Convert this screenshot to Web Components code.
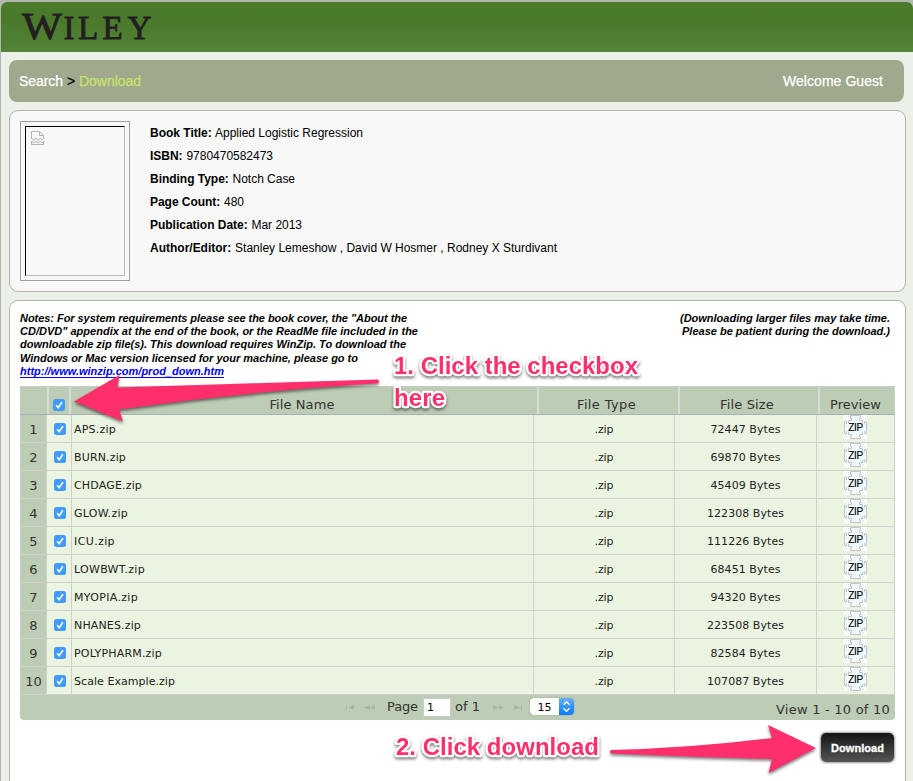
<!DOCTYPE html>
<html lang="en">
<head>
<meta charset="utf-8">
<title>Wiley Download</title>
<style>
html,body{margin:0;height:781px;overflow:hidden;background:#b3b6aa}
body{font-family:"Liberation Sans",Arial,sans-serif;color:#000}
</style>
</head>
<body>
<wiley-page></wiley-page>
<script>
const define = (name, html, setup) => customElements.define(name, class extends HTMLElement {
  constructor() {
    super();
    this.attachShadow({ mode: 'open' });
  }
  connectedCallback() {
    if (this.shadowRoot.childNodes.length) return;
    const t = document.createElement('template');
    t.innerHTML = typeof html === 'function' ? html(this) : html;
    this.shadowRoot.append(t.content.cloneNode(true));
    if (setup) setup(this);
  }
});

/* Spaces its letters so that the line takes the width given in "w". */
define('fit-text', '<style>:host{display:inline-block;white-space:pre}span{display:inline-block;text-decoration:inherit}</style><span><slot></slot></span>', el => {
  const s = el.shadowRoot.querySelector('span'), w = +el.getAttribute('w'), n = el.textContent.length;
  if (!w) return;
  s.style.letterSpacing = (w - s.getBoundingClientRect().width) / n + 'px';
});

define('site-header', `<style>
:host{display:block;height:50px;background:linear-gradient(#4a7a2b 0,#4a792c 35%,#538336 100%);border-radius:6px 6px 0 0}
svg{display:block}
text{font-family:"Liberation Serif",serif;fill:#231f20;stroke:#231f20;stroke-width:.9px}
</style>
<svg width="200" height="50"><text x="21" y="37" font-size="38" textLength="40" lengthAdjust="spacingAndGlyphs">W</text><text x="62.500 77 101.500 126.500" y="37" font-size="33">ILEY</text></svg>`);

define('crumb-bar', `<style>
:host{display:flex;align-items:center;justify-content:space-between;box-sizing:border-box;height:42px;margin:8px 9px 0 8px;padding:0 21px 0 10px;border-radius:8px;background:#a0a98e;font-size:14px;color:#fff;-webkit-text-stroke:.25px}
i{font-style:normal;color:#000}b{font-weight:400;color:#c6e468}
</style><span><fit-text w="44">Search</fit-text> <i>&gt;</i> <b><fit-text w="62">Download</fit-text></b></span><fit-text w="100">Welcome Guest</fit-text>`);

define('info-panel', `<style>
:host{display:block;box-sizing:border-box;margin:8px 7px 0 8px;border:1px solid #b1b5a8;border-radius:9px;background:var(--fill,#fff)}
</style><slot></slot>`);

define('book-cover', `<style>
:host{display:block;box-sizing:border-box;width:110px;height:160px;border:1px solid #a0a0a0;padding:4px}
div{box-sizing:border-box;height:150px;width:100px;border:1px solid #bbb;border-top-color:#000;border-left-color:#000;padding:4px 5px}
svg{display:block}
</style><div><svg width="13" height="14" fill="none" stroke="#b4b4b4"><path d="M.5 8V.5H8.5L12.500 4V8M8.500.5V4.500H12M.5 7.5L3 9.5L5 7L7 9.500L9 7L12 9M.5 10V13.5H12.5V10M.5 10.5L3 12L5 10.5L7 12L9 10.5L12 12"/></svg></div>`);

define('book-field', `<style>:host{display:block;height:23px;line-height:23px;font-size:12px;white-space:pre}b{font-weight:700;margin-right:.5px}</style><fit-text></fit-text>`, el => {
  const f = el.shadowRoot.querySelector('fit-text');
  const w = +el.getAttribute('w');
  const b = document.createElement('b');
  b.textContent = el.getAttribute('label') + ':';
  f.append(b, ' ' + el.getAttribute('value'));
  const s = f.shadowRoot.querySelector('span');
  s.style.letterSpacing = (w - s.getBoundingClientRect().width) / f.textContent.length + 'px';
});

define('book-details', `<style>
:host{display:flex;gap:20px;padding:10px;height:160px}
.d{padding-top:1px}
</style><book-cover></book-cover><div class="d">
<book-field w="213" label="Book Title" value="Applied Logistic Regression"></book-field>
<book-field w="123" label="ISBN" value="9780470582473"></book-field>
<book-field w="145" label="Binding Type" value="Notch Case"></book-field>
<book-field w="94" label="Page Count" value="480"></book-field>
<book-field w="152" label="Publication Date" value="Mar 2013"></book-field>
<book-field w="407" label="Author/Editor" value="Stanley Lemeshow , David W Hosmer , Rodney X Sturdivant"></book-field></div>`);

define('download-notes', `<style>
:host{display:flex;justify-content:space-between;height:74px;padding:11px 15px 0 10px;font:italic bold 11px/13.2px "Liberation Sans",Arial,sans-serif}
fit-text{display:block}.r{text-align:right}a{display:block;width:204px;height:13px;box-sizing:border-box;color:#00e;border-bottom:1px solid #00e}
</style><div>
<fit-text w="387">Notes: For system requirements please see the book cover, the "About the</fit-text>
<fit-text w="398">CD/DVD" appendix at the end of the book, or the ReadMe file included in the</fit-text>
<fit-text w="386">downloadable zip file(s). This download requires WinZip. To download the</fit-text>
<fit-text w="338">Windows or Mac version licensed for your machine, please go to</fit-text>
<a><fit-text w="204">http://www.winzip.com/prod_down.htm</fit-text></a></div>
<div class="r"><fit-text w="210">(Downloading larger files may take time.</fit-text><fit-text w="208">Please be patient during the download.)</fit-text></div>`);

define('check-box', `<style>:host{display:block;width:12px;height:12px}svg{display:block}</style>
<svg width="12" height="12"><rect width="12" height="12" rx="2.5" fill="#409cf8"/><path d="M3.2 6.2L5.2 8.7L8.9 3.3" fill="none" stroke="#fff" stroke-width="1.6"/></svg>`);

define('zip-icon', `<style>:host{display:block;width:23px;height:24px}svg{display:block}text{font:10px "Liberation Sans",Arial,sans-serif;fill:#000;stroke:#000;stroke-width:.15px}</style>
<svg width="23" height="24"><rect width="23" height="24" fill="#fcfdfc"/><path d="M6.5.5H16.5V3.5H15.500V5.500H18.500V8.500H20.500V6.500H22.500V18.500H20.500V16.500H18.500V19.500H15.500V21.500H16.500V23.500H6.500V21.500H7.500V19.500H4.500V16.500H2.500V18.500H.5V6.500H2.500V8.500H4.500V5.500H7.500V3.500H6.500Z" fill="#effaff" stroke="#c3c5c8"/><path d="M1 5L5 1M2 7L6 3M18 1L22 5M17 3L21 7M1 19L5 23M2 17L6 21M18 23L22 19M17 21L21 17" stroke="#c9cfcc" stroke-dasharray="1 1" fill="none"/><rect x="3" y="8" width="17" height="9" fill="#effaff"/><text x="4.200" y="16" textLength="15" lengthAdjust="spacing">ZIP</text></svg>`);

define('file-row', el => {
  const a = n => el.getAttribute(n);
  return `<style>
:host{display:grid;grid-template-columns:26px 25px 462px 141px 142px 78px;height:28px;font:11px "DejaVu Sans",Verdana,sans-serif;color:#222;border-left:1px solid #ccc;box-sizing:border-box}
div{box-sizing:border-box;border-right:1px solid #d0d0d0;border-bottom:1px solid #d0d0d0;background:#eaf4e0;display:flex;align-items:center;justify-content:center;padding-top:1px}
.n{background:#bdccb5;font-size:13px;color:#333}
.f{justify-content:flex-start;padding-left:2px}
.z{align-items:flex-start;padding-top:0}
.c{padding-top:0}
check-box{margin-left:1px}
</style><div class="n">${a('n')}</div><div class="c"><check-box></check-box></div><div class="f"><fit-text w="${a('w')}">${a('name')}</fit-text></div><div><fit-text w="19">.zip</fit-text></div><div><fit-text w="${a('size').length > 5 ? 77 : 70}">${a('size')} Bytes</fit-text></div><div class="z"><zip-icon></zip-icon></div>`;
});

define('grid-head', `<style>
:host{display:grid;grid-template-columns:29px 22px 468px 141px 140px 75px;box-sizing:border-box;height:29px;background:#bdccb5;border-top:1px solid #c9cdc6;border-bottom:1px solid #a6b2b8;font:13px "DejaVu Sans",Verdana,sans-serif;color:#333}
div{display:flex;justify-content:center;align-items:flex-start;padding-top:10px;box-sizing:border-box;border-right:2px solid #d9dcd6}
div:last-child{border-right:1px solid #ccc;padding-right:3px}
.n,.t{padding-right:4px}
check-box{margin-top:2px}
</style><div></div><div><check-box></check-box></div><div class="n"><fit-text w="65">File Name</fit-text></div><div class="t"><fit-text w="59">File Type</fit-text></div><div class="t"><fit-text w="54">File Size</fit-text></div><div><fit-text w="51">Preview</fit-text></div>`);

define('grid-pager', `<style>
:host{display:flex;align-items:flex-start;height:25px;background:#bdccb5;border-radius:0 0 4px 4px;font:13px/15px "DejaVu Sans",Verdana,sans-serif;color:#333;box-sizing:border-box;padding-left:325px}
svg{display:block}
.arr{margin-top:8px}
.p{margin:4px 5px 0 16px}
.in{box-sizing:border-box;width:28px;height:19px;margin-top:3px;border:1px solid #ccc;background:#fff;color:#000;font-size:11px;line-height:18px;padding-left:3px}
.of{margin:4px 0 0 4px}
.sel{display:flex;width:44px;height:17px;margin:3px 0 0 11px;background:#fff;border-radius:4px;overflow:hidden;box-shadow:0 0 1px #555;color:#000;font-size:11px;line-height:19px}
.sel span{width:29px;text-align:center}
.view{margin:7px 5px 0 auto}
</style>
<svg class="arr" width="31" height="9" fill="#a9b5a1"><path d="M1 2h1v5h-1zM9 2V7L3 4.500ZM25 2V7L19 4.500ZM30 2V7L25 4.500Z"/></svg>
<fit-text class="p" style="margin-left:11px" w="31">Page</fit-text><div class="in">1</div><fit-text class="of" w="25">of 1</fit-text>
<svg class="arr" style="margin-left:12px" width="32" height="9" fill="#a9b5a1"><path d="M1 2V7L7 4.500ZM7 2V7L12 4.500ZM22 2V7L28 4.500ZM29 2h1v5h-1z"/></svg>
<div class="sel" style="margin-left:6px"><span>15</span><svg width="15" height="17"><defs><linearGradient id="g" x2="0" y2="1"><stop stop-color="#67b0f8"/><stop offset="1" stop-color="#087bfb"/></linearGradient></defs><rect width="15" height="17" fill="url(#g)"/><path d="M4.500 6.700L7.500 3.700L10.500 6.700M4.500 10.300L7.500 13.300L10.500 10.300" fill="none" stroke="#fff" stroke-width="1.300"/></svg></div>
<fit-text class="view" w="114">View 1 - 10 of 10</fit-text>`);

const files = [['APS.zip','72447',42],['BURN.zip','69870',52],['CHDAGE.zip','45409',68],['GLOW.zip','122308',54],['ICU.zip','111226',41],['LOWBWT.zip','68451',71],['MYOPIA.zip','94320',64],['NHANES.zip','223508',67],['POLYPHARM.zip','82584',88],['Scale Example.zip','107087',101]];
define('file-grid', () => `<style>:host{display:block;width:875px;margin-left:10px}</style><grid-head></grid-head>${files.map((f, i) => `<file-row n="${i + 1}" name="${f[0]}" size="${f[1]}" w="${f[2]}"></file-row>`).join('')}<grid-pager></grid-pager>`);

define('download-button', `<style>
:host{display:flex;align-items:center;justify-content:center;width:73px;height:29px;margin:13px 11px 30px auto;border-radius:5px;background:linear-gradient(#151515,#555);box-shadow:0 0 3px #333;color:#fff;font:bold 11px "Liberation Sans",Arial,sans-serif;-webkit-text-stroke:.3px}
</style><fit-text w="53">Download</fit-text>`);

define('guide-overlay', `<style>
:host{position:absolute;left:0;top:0}
svg{display:block}
text{font:bold 24px "Liberation Sans",Helvetica,sans-serif;fill:#ff2f6c;stroke:#fff;stroke-width:4.500px;stroke-linejoin:round;paint-order:stroke}
path{fill:#ff2f6c}
.s{filter:drop-shadow(0 2px 1.500px rgba(0,0,0,.5))}
</style><svg width="913" height="781"><g class="s">
<path d="M74 401.500L119.500 375L117.500 387.500L378 379.500Q380 381.500 378 383.300Q250 391 119 409.500L123 421.500Z"/>
<path d="M611 750Q690 748 772 738L768 725L816 748L768.500 773L772 759Q690 757 611 753.500Q609 752 611 750Z"/></g>
<g class="s"><text x="394" y="374" textLength="244">1. Click the checkbox</text><text x="394" y="406" textLength="51">here</text><text x="396" y="755" textLength="203">2. Click download</text></g></svg>`);

define('wiley-page', `<style>
:host{display:block;position:relative;height:781px;overflow:hidden;padding:2px 0 0 1px;box-sizing:border-box}
main{display:block;height:779px;background:#ebf0e8;border-radius:6px 6px 0 0}
.b{--fill:#f8f8f8}
</style><main><site-header></site-header><crumb-bar></crumb-bar>
<info-panel class="b"><book-details></book-details></info-panel>
<info-panel><download-notes></download-notes><file-grid></file-grid><download-button></download-button></info-panel></main><guide-overlay></guide-overlay>`);
</script>
</body>
</html>
